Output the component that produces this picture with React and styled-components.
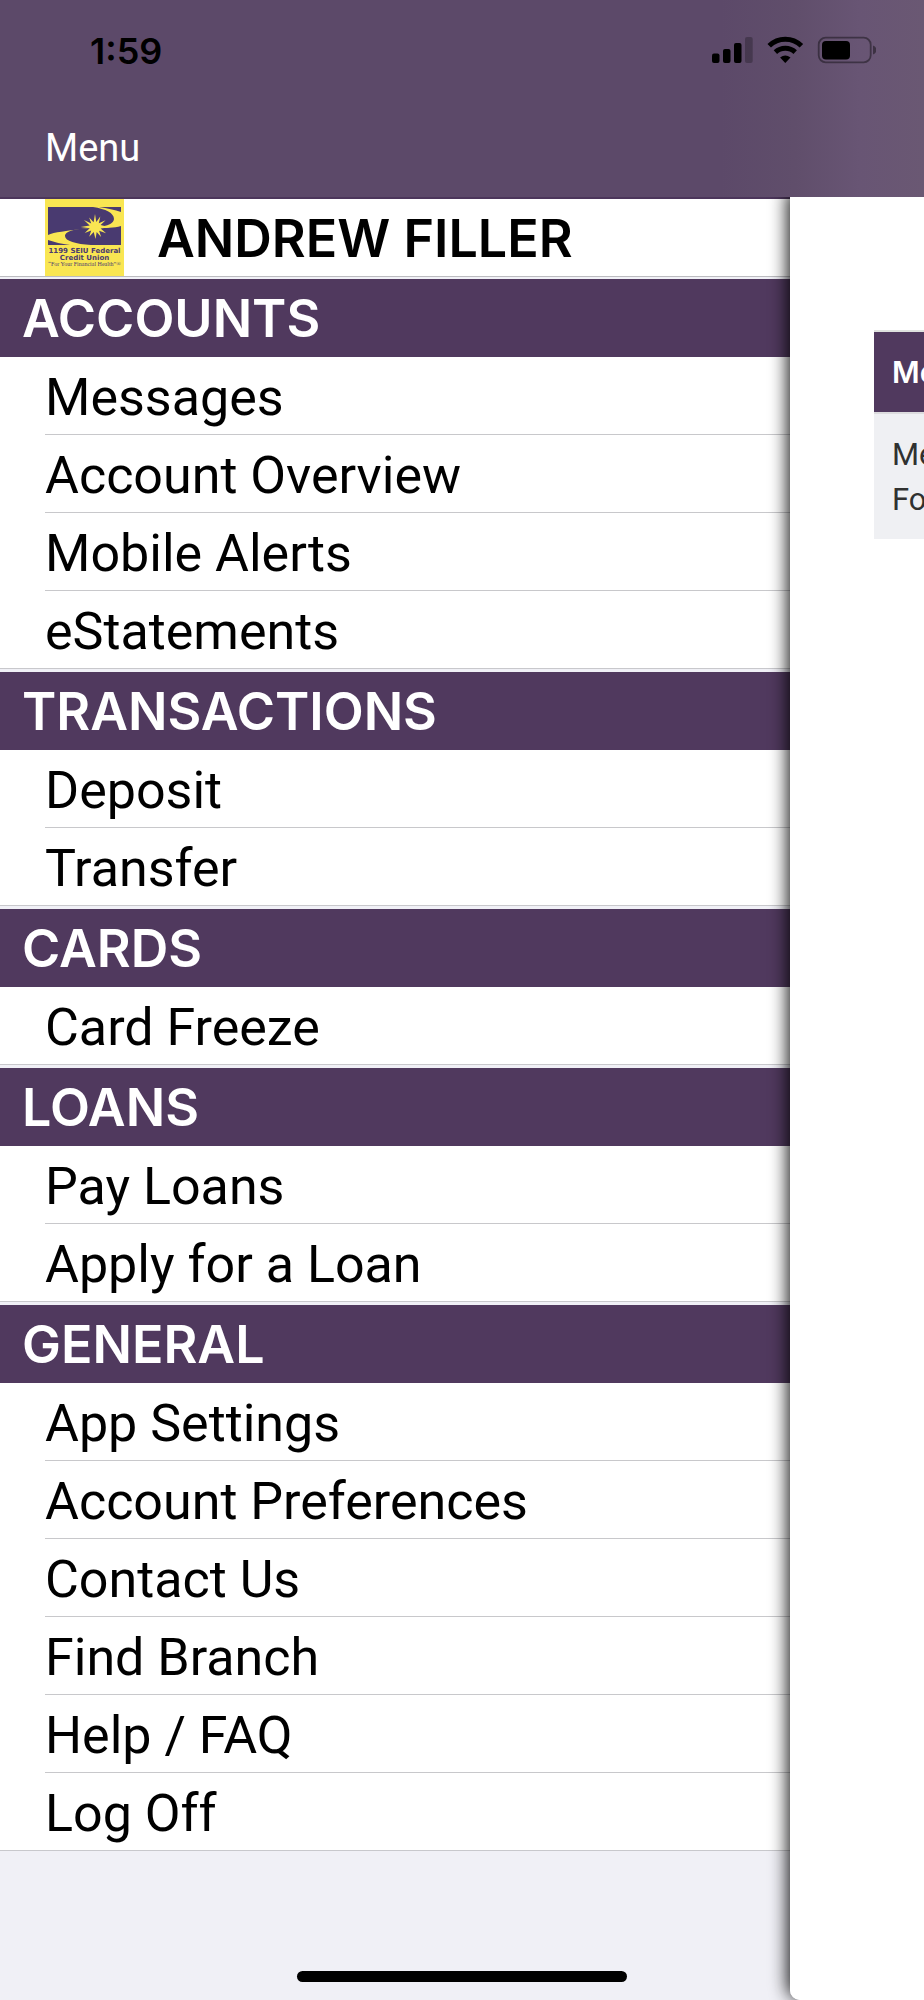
import React from "react";
import styled, { createGlobalStyle } from "styled-components";

const GlobalStyle = createGlobalStyle`
  * { box-sizing: border-box; }
  body {
    margin: 0;
    background: #f0f0f6;
    color: #000;
    font-family: Roboto, "Liberation Sans", sans-serif;
  }
`;

const Screen = styled.div`
  position: relative;
  display: flex;
  flex-direction: column;
  min-height: 100vh;
  overflow: hidden;
`;

const TopBar = styled.header`
  height: 197px;
  background: linear-gradient(to right, #5c4969 78%, #604e6b 86%, #685574 93%, #6a5873 100%);
`;

const StatusBar = styled.div`
  display: flex;
  align-items: center;
  justify-content: space-between;
  height: 100px;
  padding: 0 48px 0 90px;
`;

const Clock = styled.time`
  padding-top: 2px;
  font-family: Inter, "Liberation Sans", sans-serif;
  font-size: 36px;
  line-height: 44px;
  font-weight: 600;
`;

const StatusIcons = styled.svg`
  width: 166px;
  height: 28px;
`;

const Title = styled.h1`
  margin: 0;
  padding: 24px 45px 0;
  color: #fff;
  font-size: 38px;
  line-height: 48px;
  font-weight: 400;
`;

const Content = styled.div`
  flex: 1;
  display: grid;
  grid-template-columns: minmax(0, 1fr) 134px;
`;

const Drawer = styled.nav`
  border-top: 2px solid #4c365b;
`;

const Profile = styled.div`
  display: flex;
  align-items: center;
  gap: 33px;
  height: 78px;
  padding-left: 45px;
  background: #fff;
  border-bottom: 1px solid #bcbcc0;
`;

const ProfileName = styled.span`
  padding-top: 2px;
  font-family: Inter, "Liberation Sans", sans-serif;
  font-size: 52px;
  line-height: 74px;
  font-weight: 600;
  white-space: nowrap;
`;

const Logo = styled.svg`
  flex: none;
  width: 79px;
  height: 77px;
`;

const Section = styled.section`
  padding-top: ${(p) => (p.$first ? 2 : 3)}px;
`;

const SectionTitle = styled.h2`
  margin: 0;
  height: 78px;
  padding: 2px 22px 0;
  background: #50395e;
  color: #fff;
  font-family: Inter, "Liberation Sans", sans-serif;
  font-size: 52px;
  line-height: 76px;
  font-weight: 600;
`;

const Items = styled.ul`
  margin: 0;
  padding: 0;
  list-style: none;
  background: #fff;
  border-bottom: 1px solid #c8c8cc;
`;

const Item = styled.li`
  padding-left: 45px;
`;

const ItemLink = styled.a`
  display: block;
  height: ${(p) => (p.$last ? 77 : 78)}px;
  padding-top: 4px;
  border-bottom: ${(p) => (p.$last ? "none" : "1px solid #c8c8cb")};
  color: #000;
  font-size: 52px;
  line-height: 73px;
  text-decoration: none;
  white-space: nowrap;
`;

const Page = styled.main`
  position: relative;
  padding: 133px 0 0 84px;
  overflow: hidden;
  background: #fff;
  border-bottom-left-radius: 10px;
`;

const PageFrame = styled.div`
  display: grid;
  border-bottom-left-radius: 10px;
  box-shadow: 0 -4px 18px 2px rgba(0, 0, 0, 0.95);
  clip-path: inset(0 0 0 -30px);
`;

const MessageTable = styled.table`
  width: 100%;
  border-collapse: collapse;
  text-align: left;
  font-size: 31px;
  line-height: 45px;
`;

const HeadCell = styled.th`
  height: 82px;
  padding: 0 0 0 18px;
  border-top: 2px solid #dfe2df;
  border-bottom: 2px solid #dcdcde;
  background: #50395e;
  color: #fff;
  font-family: Inter, "Liberation Sans", sans-serif;
  font-size: 30px;
  font-weight: 600;
`;

const Cell = styled.td`
  height: 126px;
  padding: 0 0 0 18px;
  background: #eff0f3;
  color: #303130;
`;

const HomeIndicator = styled.div`
  position: absolute;
  bottom: 18px;
  left: 50%;
  width: 330px;
  height: 11px;
  margin-left: -165px;
  border-radius: 6px;
  background: #000;
`;

const SECTIONS = [
  ["ACCOUNTS", ["Messages", "Account Overview", "Mobile Alerts", "eStatements"]],
  ["TRANSACTIONS", ["Deposit", "Transfer"]],
  ["CARDS", ["Card Freeze"]],
  ["LOANS", ["Pay Loans", "Apply for a Loan"]],
  ["GENERAL", ["App Settings", "Account Preferences", "Contact Us", "Find Branch", "Help / FAQ", "Log Off"]],
];

function PhoneStatus() {
  return (
    <StatusIcons viewBox="0 0 166 28" aria-hidden="true">
      <rect x="2" y="17.5" width="7.5" height="9.5" rx="2" />
      <rect x="13" y="13" width="7.5" height="14" rx="2" />
      <rect x="24" y="7" width="7.5" height="20" rx="2" />
      <rect x="35" y="1" width="7.7" height="26" rx="2" opacity=".25" />
      <g fill="none" stroke="#000" strokeWidth="5">
        <path d="M59.2 9.8a23 23 0 0 1 32.2 0" />
        <path d="M65.4 16.2a14.5 14.5 0 0 1 19.8 0" />
      </g>
      <path d="M75.3 27l-5.2-5.4q5.2-4.2 10.4 0z" />
      <rect x="108.7" y="1.7" width="52" height="24.6" rx="7" fill="none" stroke="#000" strokeOpacity=".4" strokeWidth="1.8" />
      <rect x="112" y="5" width="28" height="18.6" rx="4" />
      <path d="M163 9.5q3.4 1.2 3.4 4.5t-3.4 4.5z" opacity=".42" />
    </StatusIcons>
  );
}

function CreditUnionLogo() {
  return (
    <Logo viewBox="0 0 79 77" role="img" aria-label="1199 SEIU Federal Credit Union">
      <path fill="#f9e652" d="M0 0h79v77H0z" />
      <path fill="#493a70" d="M3 8h45C61 10 69 14 69 20C68 28 52 28 36 30C22 32 9 33 3 36z" />
      <path fill="#493a70" d="M54 8h22v5C70 11 62 9 54 8z" />
      <path fill="#493a70" d="M76 27v19H46C31 45 20 42 20 37C20 31 36 29 50 29C61 29 69 29 76 27z" />
      <path fill="#493a70" d="M3 41C10 43 16 45 25 46H3z" />
      <path
        fill="#f9e652"
        d="M50 15l1.3 8 4-5.5-1.5 6.7 6.8-3-5 4.8 9 2.2-9 1.2 5.5 4.8-7-2.5 2 6.3-4.4-5-1.2 7-1.8-7-4.5 4.8 2-6.2-6.5 2.4 5-4.8-9-1.2 9-1.6-5.8-5.3 7.3 3.3-2-6 4.4 4.8z"
      />
      <g fill="#493a70" textAnchor="middle">
        <text x="39.5" y="54" fontFamily="DejaVu Sans" fontSize="7" fontWeight="700">1199 SEIU Federal</text>
        <text x="39.5" y="61" fontFamily="DejaVu Sans" fontSize="7" fontWeight="700">Credit Union</text>
        <text x="39.5" y="67" fontFamily="Liberation Serif" fontSize="6">“For Your Financial Health”®</text>
      </g>
    </Logo>
  );
}

export default function App() {
  return (
    <>
      <GlobalStyle />
      <Screen>
        <TopBar>
          <StatusBar>
            <Clock>1:59</Clock>
            <PhoneStatus />
          </StatusBar>
          <Title>Menu</Title>
        </TopBar>
        <Content>
          <Drawer aria-label="Menu">
            <Profile>
              <CreditUnionLogo />
              <ProfileName>ANDREW FILLER</ProfileName>
            </Profile>
            {SECTIONS.map(([title, items], s) => (
              <Section key={title} $first={s === 0}>
                <SectionTitle>{title}</SectionTitle>
                <Items>
                  {items.map((label, i) => (
                    <Item key={label}>
                      <ItemLink href="#" $last={i === items.length - 1}>{label}</ItemLink>
                    </Item>
                  ))}
                </Items>
              </Section>
            ))}
          </Drawer>
          <PageFrame>
            <Page>
              <MessageTable>
                <thead>
                  <tr><HeadCell scope="col">Me</HeadCell></tr>
                </thead>
                <tbody>
                  <tr><Cell>Me<br />Fo</Cell></tr>
                </tbody>
              </MessageTable>
            </Page>
          </PageFrame>
        </Content>
        <HomeIndicator />
      </Screen>
    </>
  );
}
